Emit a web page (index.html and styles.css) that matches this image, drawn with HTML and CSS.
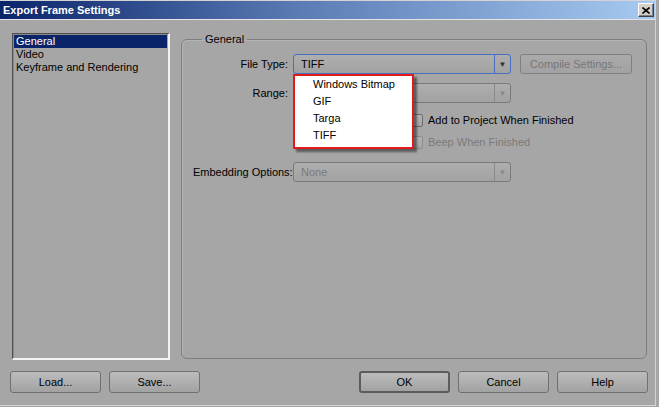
FILE: index.html
```html
<!DOCTYPE html>
<html lang="en">
<head>
<meta charset="UTF-8">
<title>Export Frame Settings</title>
<link rel="stylesheet" href="styles.css">
</head>
<body>

<div class="window">

<div class="titleBar">
<b class="titleText">Export Frame Settings</b>
<span class="closeBtn">
<svg width="8" height="7" viewBox="0 0 8 7"><path d="M0.5 0.5 L7.5 6.5 M7.5 0.5 L0.5 6.5" stroke="#000" stroke-width="1.6" fill="none"/></svg>
</span>
</div>

<div class="mainArea">

<ul class="pageList">
<li class="pageItem selected">General</li>
<li class="pageItem">Video</li>
<li class="pageItem">Keyframe and Rendering</li>
</ul>

<fieldset class="groupBox">
<legend class="groupTitle">General</legend>

<div class="formRow firstRow">
<label class="fieldLabel">File Type:</label>
<div class="selectWrap">
<div class="selectBox focused">
<span class="selectValue">TIFF</span>
<span class="selectArrow">&#9660;</span>
</div>
<ul class="dropList">
<li>Windows Bitmap</li>
<li>GIF</li>
<li>Targa</li>
<li>TIFF</li>
</ul>
</div>
<button class="btns compileBtn" disabled>Compile Settings...</button>
</div>

<div class="formRow rangeRow">
<label class="fieldLabel">Range:</label>
<div class="selectBox disabled">
<span class="selectValue"></span>
<span class="selectArrow">&#9660;</span>
</div>
</div>

<div class="checkRow addRow">
<span class="checkBox"></span>
<span>Add to Project When Finished</span>
</div>

<div class="checkRow beepRow disabledText">
<span class="checkBox disabled"></span>
<span>Beep When Finished</span>
</div>

<div class="formRow embedRow">
<label class="fieldLabel">Embedding Options:</label>
<div class="selectBox disabled">
<span class="selectValue">None</span>
<span class="selectArrow">&#9660;</span>
</div>
</div>

</fieldset>

</div>

<div class="footer">
<button class="btns">Load...</button>
<button class="btns">Save...</button>
<button class="btns okBtn">OK</button>
<button class="btns">Cancel</button>
<button class="btns">Help</button>
</div>

</div>

</body>
</html>
```

FILE: styles.css
```css
*,*:before,*:after{
margin: 0;
padding: 0;
box-sizing: border-box;
}

html,body{
width: 659px;
height: 407px;
overflow: hidden;
background: #a6a6a6;
font-family: "Liberation Sans", Arial, sans-serif;
font-size: 11px;
color: #000;
}

ul{
list-style-type: none;
}

.window{
width: 656px;
height: 406px;
background: #a6a6a6;
border-top: 1px solid #d4d4d4;
border-right: 1px solid #d4d4d4;
border-bottom: 1px solid #d4d4d4;
}


/* title bar */

.titleBar{
height: 19px;
padding: 0 1px 0 3px;
display: flex;
align-items: center;
justify-content: space-between;
background: linear-gradient(to right, #0a246a, #5a7ab4 45%, #a6caf0);
border-bottom: 1px solid #e4e4e4;
}

.titleText{
color: #fff;
font-size: 11px;
font-weight: bold;
}

.closeBtn{
width: 16px;
height: 14px;
display: flex;
align-items: center;
justify-content: center;
background: #d4d0c8;
border-top: 1px solid #fff;
border-left: 1px solid #fff;
border-right: 1px solid #404040;
border-bottom: 1px solid #404040;
box-shadow: inset -1px -1px 0 #808080;
}

.closeBtn svg{
display: block;
}


/* list + group */

.mainArea{
display: flex;
gap: 11px;
padding: 13px 8px 0 12px;
}

.pageList{
width: 158px;
height: 327px;
padding: 1px;
border-top: 1px solid #505050;
border-left: 1px solid #505050;
border-right: 2px solid #f2f2f2;
border-bottom: 2px solid #f2f2f2;
box-shadow: inset 1px 1px 0 #8a8a8a;
}

.pageItem{
height: 13px;
line-height: 13px;
padding-left: 2px;
white-space: nowrap;
}

.pageItem.selected{
background: #0a246a;
color: #fff;
}

.groupBox{
flex: 1;
height: 326px;
min-width: 0;
padding: 8px 0 0 11px;
border: 1px solid #7e7e7e;
border-radius: 6px;
box-shadow: inset 1px 1px 0 #b4b4b4;
}

.groupTitle{
margin-left: 9px;
padding: 0 3px;
line-height: 13px;
}


/* form rows */

.formRow{
display: flex;
align-items: center;
height: 20px;
}

.rangeRow{
margin-top: 9px;
}

.embedRow{
margin-top: 13px;
}

.fieldLabel{
width: 95px;
margin-right: 5px;
text-align: right;
white-space: nowrap;
}

.selectWrap{
position: relative;
}

.selectBox{
width: 218px;
height: 20px;
display: flex;
align-items: stretch;
background: linear-gradient(#aeaeae, #a2a2a2);
border: 1px solid #7a7a7a;
border-radius: 3px;
}

.selectBox.focused{
border-color: #4670bd;
}

.selectValue{
flex: 1;
padding-left: 7px;
line-height: 18px;
}

.selectBox.disabled .selectValue{
color: #7a7a7a;
}

.selectArrow{
width: 16px;
border-left: 1px solid #8a8a8a;
display: flex;
align-items: center;
justify-content: center;
font-size: 8px;
color: #333;
}

.selectBox.focused .selectArrow{
border-left-color: #4670bd;
}

.selectBox.disabled .selectArrow{
color: #888;
}


/* dropdown menu */

.dropList{
position: absolute;
top: 20px;
left: 0;
width: 121px;
padding: 0 0 3px 18px;
background: #fff;
border: 2px solid #e3191b;
box-shadow: 3px 3px 2px rgba(0, 0, 0, .45);
z-index: 5;
}

.dropList li{
height: 17px;
line-height: 17px;
white-space: nowrap;
}


/* checkboxes */

.checkRow{
display: flex;
align-items: center;
gap: 5px;
height: 14px;
padding-left: 217px;
}

.addRow{
margin-top: 10px;
}

.beepRow{
margin-top: 8px;
}

.checkBox{
width: 13px;
height: 13px;
background: linear-gradient(#b2b2b2, #a4a4a4);
border: 1px solid #6c6c6c;
border-radius: 2px;
}

.checkBox.disabled{
border-color: #8c8c8c;
}

.disabledText{
color: #7a7a7a;
}


/* buttons */

.btns{
width: 91px;
height: 22px;
font-family: inherit;
font-size: 11px;
color: #000;
background: linear-gradient(#bcbcbc, #a2a2a2);
border: 1px solid #707070;
border-radius: 3px;
}

.btns:disabled{
color: #787878;
background: linear-gradient(#aaaaaa, #a2a2a2);
border-color: #808080;
}

.compileBtn{
width: 112px;
height: 20px;
margin-left: 9px;
}

.okBtn{
margin-left: auto;
border: 2px solid #5c5c5c;
}

.footer{
display: flex;
gap: 8px;
margin-top: 11px;
padding: 0 7px 0 10px;
}
```
